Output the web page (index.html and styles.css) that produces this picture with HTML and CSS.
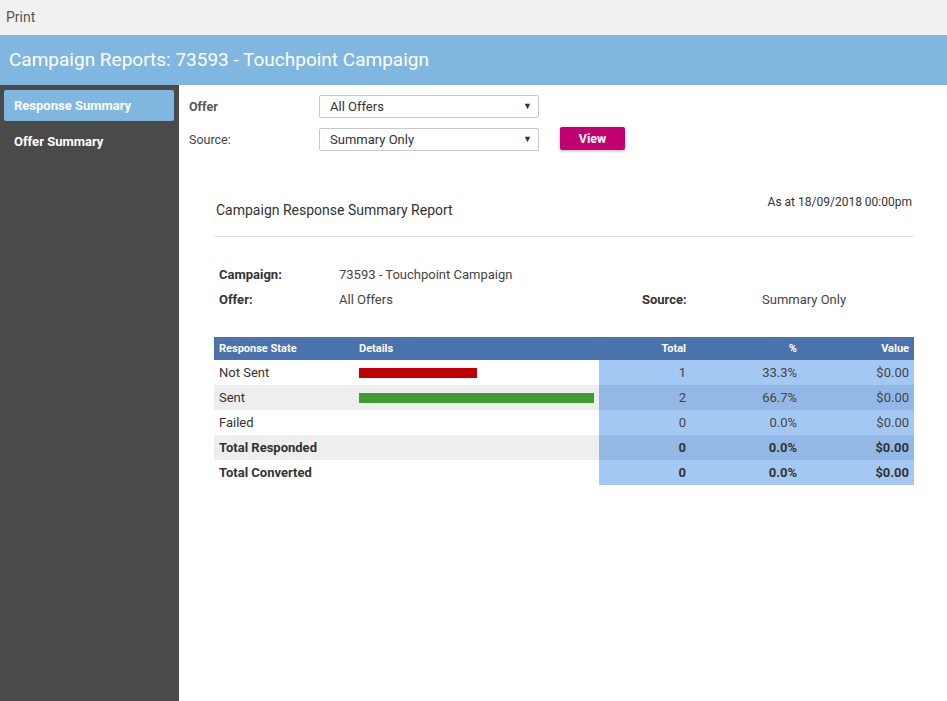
FILE: index.html
```html
<!DOCTYPE html>
<html>
<head>
<meta charset="utf-8">
<link rel="stylesheet" href="styles.css">
</head>
<body>
<div class="topbar">Print</div>
<div class="header">Campaign Reports: 73593 - Touchpoint Campaign</div>
<div class="main">
  <nav class="sidebar">
    <div class="nav-item active">Response Summary</div>
    <div class="nav-item">Offer Summary</div>
  </nav>
  <section class="content">
    <div class="form-row">
      <label class="form-label bold">Offer</label>
      <div class="select"><span>All Offers</span><span class="arrow">▼</span></div>
    </div>
    <div class="form-row">
      <label class="form-label">Source:</label>
      <div class="select"><span>Summary Only</span><span class="arrow">▼</span></div>
      <button class="btn-view">View</button>
    </div>

    <div class="report">
      <div class="report-head">
        <div class="report-title">Campaign Response Summary Report</div>
        <div class="report-date">As at 18/09/2018 00:00pm</div>
      </div>
      <div class="divider"></div>
      <div class="info">
        <div class="info-row">
          <div class="info-label">Campaign:</div>
          <div class="info-value">73593 - Touchpoint Campaign</div>
        </div>
        <div class="info-row">
          <div class="info-label">Offer:</div>
          <div class="info-value wide">All Offers</div>
          <div class="info-label">Source:</div>
          <div class="info-value">Summary Only</div>
        </div>
      </div>

      <table class="data">
        <thead>
          <tr>
            <th class="c-state">Response State</th>
            <th class="c-details">Details</th>
            <th class="c-num c-total">Total</th>
            <th class="c-num c-pct">%</th>
            <th class="c-num c-val">Value</th>
          </tr>
        </thead>
        <tbody>
          <tr>
            <td>Not Sent</td>
            <td><div class="bar red" style="width:118px"></div></td>
            <td class="num hl">1</td>
            <td class="num hl">33.3%</td>
            <td class="num hl">$0.00</td>
          </tr>
          <tr class="alt">
            <td>Sent</td>
            <td><div class="bar green" style="width:235px"></div></td>
            <td class="num hl">2</td>
            <td class="num hl">66.7%</td>
            <td class="num hl">$0.00</td>
          </tr>
          <tr>
            <td>Failed</td>
            <td></td>
            <td class="num hl">0</td>
            <td class="num hl">0.0%</td>
            <td class="num hl">$0.00</td>
          </tr>
          <tr class="alt total">
            <td>Total Responded</td>
            <td></td>
            <td class="num hl">0</td>
            <td class="num hl">0.0%</td>
            <td class="num hl">$0.00</td>
          </tr>
          <tr class="total">
            <td>Total Converted</td>
            <td></td>
            <td class="num hl">0</td>
            <td class="num hl">0.0%</td>
            <td class="num hl">$0.00</td>
          </tr>
        </tbody>
      </table>
    </div>
  </section>
</div>
</body>
</html>
```

FILE: styles.css
```css
* { box-sizing: border-box; }
html, body { margin: 0; padding: 0; height: 100%; }
body {
  font-family: Roboto, "Liberation Sans", Arial, sans-serif;
  color: #333;
  background: #fff;
  display: flex;
  flex-direction: column;
  height: 701px;
  overflow: hidden;
}
.topbar {
  height: 35px;
  background: #f1f1f1;
  color: #555;
  font-size: 14px;
  line-height: 34px;
  padding-left: 6px;
  flex: none;
}
.header {
  height: 50px;
  background: #7fb7e0;
  color: #fff;
  font-size: 19px;
  line-height: 50px;
  padding-left: 9px;
  flex: none;
}
.main {
  flex: 1;
  display: flex;
  min-height: 0;
}
.sidebar {
  width: 179px;
  flex: none;
  background: #4a4a4a;
  padding: 5px 5px 0 4px;
  display: flex;
  flex-direction: column;
  gap: 5px;
}
.nav-item {
  height: 31px;
  line-height: 31px;
  padding-left: 10px;
  color: #fff;
  font-weight: bold;
  font-size: 13px;
  border-radius: 2px;
}
.nav-item.active { background: #7fb7e0; }
.content {
  flex: 1;
  padding: 10px 0 0 10px;
}
.form-row {
  display: flex;
  align-items: center;
  height: 22px;
  margin-bottom: 11px;
}
.form-label {
  width: 130px;
  font-size: 12.5px;
  color: #444;
}
.form-label.bold { font-weight: bold; color: #555; }
.select {
  width: 220px;
  height: 23px;
  border: 1px solid #c8c8c8;
  border-radius: 2px;
  display: flex;
  align-items: center;
  justify-content: space-between;
  padding: 0 6px 0 10px;
  font-size: 13px;
  color: #333;
}
.select .arrow { font-size: 9px; color: #333; }
.btn-view {
  margin-left: 21px;
  width: 65px;
  height: 23px;
  border: none;
  border-radius: 2px;
  background: #c2006f;
  color: #fff;
  font-family: inherit;
  font-weight: bold;
  font-size: 12.5px;
  box-shadow: 0 1px 3px rgba(0,0,0,0.3);
  padding: 0;
  position: relative;
  top: -1px;
}
.report {
  width: 700px;
  margin: 43px 0 0 25px;
}
.report-head {
  display: flex;
  justify-content: space-between;
  align-items: flex-start;
  padding: 0 2px;
  height: 43px;
}
.report-title {
  font-size: 14px;
  padding-top: 9px;
  color: #333;
}
.report-date {
  font-size: 12px;
  padding-top: 2px;
  color: #333;
}
.divider {
  height: 1px;
  background: #e2e2e2;
}
.info {
  padding: 25px 0 0 5px;
  font-size: 13px;
}
.info-row {
  display: flex;
  height: 25px;
  align-items: center;
}
.info-label { width: 120px; font-weight: bold; color: #333; }
.info-value { color: #444; }
.info-value.wide { width: 303px; }
table.data {
  margin-top: 25px;
  width: 700px;
  border-collapse: collapse;
  table-layout: fixed;
  font-size: 13px;
}
table.data th {
  background: #4a73ad;
  color: #fff;
  font-size: 11px;
  font-weight: bold;
  height: 23px;
  padding: 0 5px;
  text-align: left;
}
table.data th.c-num { text-align: right; }
.c-state { width: 140px; }
.c-details { width: 245px; }
.c-total { width: 92px; }
.c-pct { width: 111px; }
.c-val { width: 112px; }
table.data td {
  height: 25px;
  padding: 0 5px;
  color: #333;
}
table.data td.num { text-align: right; color: #444; }
table.data td.hl { background: #a3c8f4; }
table.data tr.alt td { background: #eeeeee; }
table.data tr.alt td.hl { background: #93b8e6; }
table.data tr.total td { font-weight: bold; color: #333; }
.bar { height: 10px; }
.bar.red { background: #c00000; }
.bar.green { background: #439a30; }
```
